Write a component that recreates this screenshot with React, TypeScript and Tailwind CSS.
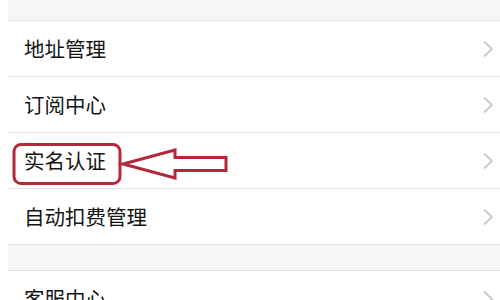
const groupOne = ['地址管理', '订阅中心', '实名认证', '自动扣费管理'];

function Chevron() {
  return (
    <svg width="12" height="18" viewBox="0 0 12 18" className="text-[#c6c6ca]">
      <polyline points="2,1.5 10,9 2,16.5" fill="none" stroke="currentColor" strokeWidth="1.8" />
    </svg>
  );
}

function Row({ label }: { label: string }) {
  return (
    <div className="h-[55px] shrink-0 flex items-center justify-between pl-4 pr-[6px] bg-white">
      <span className="text-[20.5px] text-[#151515] leading-none">{label}</span>
      <Chevron />
    </div>
  );
}

function Divider() {
  return <div className="h-px shrink-0 bg-[#e2e2e4]" />;
}

export default function App() {
  return (
    <div
      className="relative w-[500px] h-[300px] overflow-hidden bg-white flex"
      style={{ fontFamily: '"Noto Sans CJK SC", "Noto Sans", sans-serif' }}
    >
      <div className="w-2 shrink-0 bg-white" />
      <div className="flex-1 flex flex-col">
        <div className="h-[20px] shrink-0 bg-[#f6f5f8]" />
        <Divider />
        {groupOne.map((label) => (
          <div key={label} className="shrink-0">
            <Row label={label} />
            <Divider />
          </div>
        ))}
        <div className="h-[25px] shrink-0 bg-[#f6f5f8]" />
        <Divider />
        <Row label="客服中心" />
      </div>

      {/* red annotation: box + arrow */}
      <svg className="absolute left-0 top-0" width="500" height="300" viewBox="0 0 500 300">
        <rect x="14" y="144.5" width="106" height="39" rx="7" fill="none" stroke="#b3283b" strokeWidth="3" />
        <polygon
          points="123,164 175,150 175,157.5 226,157.5 226,170.5 175,170.5 175,178"
          fill="white"
          stroke="#b3283b"
          strokeWidth="3"
          strokeLinejoin="miter"
        />
      </svg>
    </div>
  );
}
